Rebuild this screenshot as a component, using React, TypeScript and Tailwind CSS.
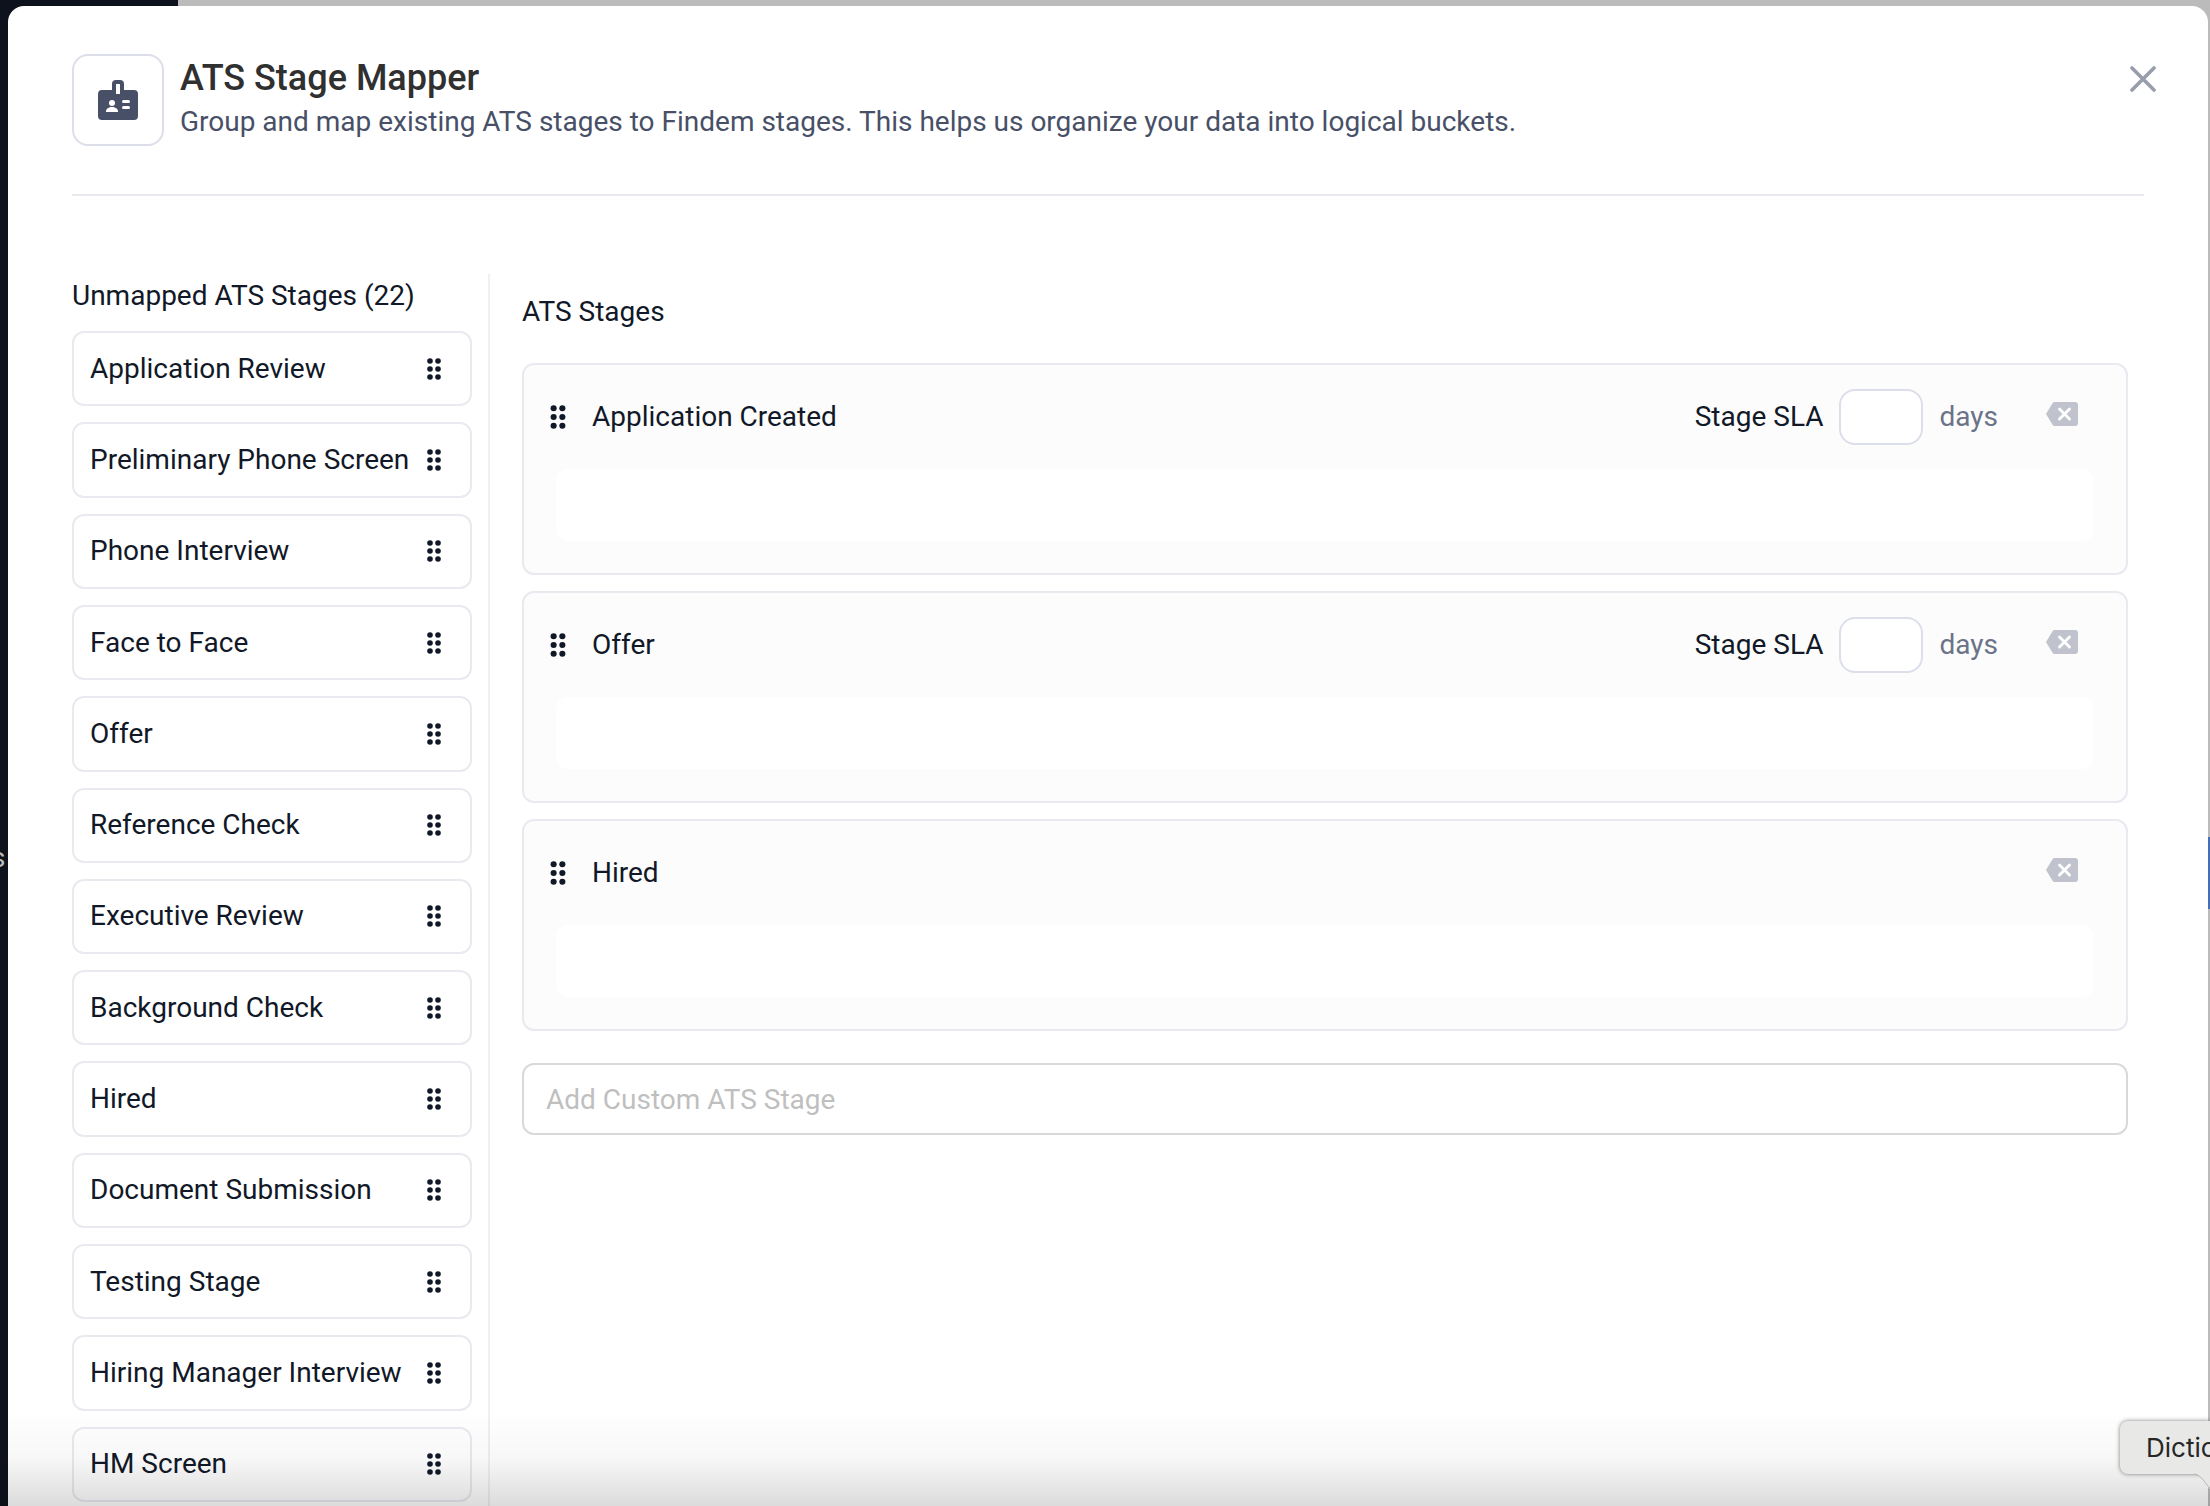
const unmappedStages = [
    "Application Review",
    "Preliminary Phone Screen",
    "Phone Interview",
    "Face to Face",
    "Offer",
    "Reference Check",
    "Executive Review",
    "Background Check",
    "Hired",
    "Document Submission",
    "Testing Stage",
    "Hiring Manager Interview",
    "HM Screen",
];

const atsStages = [
    { name: "Application Created", hasSla: true },
    { name: "Offer", hasSla: true },
    { name: "Hired", hasSla: false },
];

function DragDots({ className }: { className: string }) {
    return (
        <svg viewBox="0 0 14 22" fill="currentColor" className={className} aria-hidden="true">
            {[3, 11, 19].map((cy) => (
                <g key={cy}>
                    <circle cx="3" cy={cy} r="2.800" />
                    <circle cx="11" cy={cy} r="2.800" />
                </g>
            ))}
        </svg>
    );
}

function BadgeIcon() {
    return (
        <svg viewBox="0 0 40 40" className="size-10" aria-hidden="true">
            <path
                fill="#475067"
                d="M18 0h4a4 4 0 0 1 4 4v6h10a4 4 0 0 1 4 4v22a4 4 0 0 1-4 4H4a4 4 0 0 1-4-4V14a4 4 0 0 1 4-4h10V4a4 4 0 0 1 4-4z"
            />
            <g fill="#fff">
                <path d="M18 4h4v10h-4z" />
                <circle cx="14" cy="23" r="3" />
                <path d="M8 32v-1c0-2 3-4 6-4s6 2 6 4v1z" />
                <rect x="24" y="20" width="8" height="3" rx="1.5" />
                <rect x="24" y="26" width="8" height="3" rx="1.5" />
            </g>
        </svg>
    );
}

function RemoveIcon() {
    return (
        <svg viewBox="0 0 32 24" className="h-6 w-8" aria-hidden="true">
            <path
                fill="#c0c3ce"
                d="M9 0h20a3 3 0 0 1 3 3v18a3 3 0 0 1-3 3H9a3 3 0 0 1-2.500-1.300L0 12 6.500 1.300A3 3 0 0 1 9 0z"
            />
            <path d="M13.500 7l10 10M23.500 7l-10 10" stroke="#fff" strokeWidth="2.900" strokeLinecap="round" />
        </svg>
    );
}

function UnmappedList() {
    return (
        <section className="flex w-[418px] shrink-0 flex-col border-r-2 border-[#f0f0f3] pr-4">
            <h2 className="mt-1 mb-[17px] text-[28px] leading-9 whitespace-nowrap">
                Unmapped ATS Stages (22)
            </h2>

            <ul className="grid flex-1 auto-rows-fr gap-4 pb-1">
                {unmappedStages.map((stage) => (
                    <li
                        key={stage}
                        className="flex items-center justify-between rounded-xl border-2 border-[#e9e9f0] pr-[29px] pl-4"
                    >
                        <span className="text-[28px] leading-9 whitespace-nowrap">{stage}</span>
                        <DragDots className="h-[22px] w-[14px] shrink-0" />
                    </li>
                ))}
            </ul>
        </section>
    );
}

function StageCard({ name, hasSla }: { name: string; hasSla: boolean }) {
    return (
        <li className="rounded-xl border-2 border-[#e9e9f0] bg-[#fcfcfc] px-8 pt-6 pb-8">
            <div className="-ml-1.5 flex h-14 items-center">
                <DragDots className="h-6 w-4 shrink-0" />
                <h3 className="ml-[26px] text-[28px] leading-9">{name}</h3>

                <div className="ml-auto flex items-center">
                    {hasSla && (
                        <label className="flex items-center text-[28px] leading-9">
                            Stage SLA
                            <input
                                type="text"
                                className="mx-4 h-14 w-[84px] rounded-2xl border-2 border-[#dcdfea] bg-white px-3 text-center outline-none"
                            />
                            <span className="text-[#6b7389]">days</span>
                        </label>
                    )}
                    <button type="button" aria-label={`Remove ${name}`} className="mr-4 ml-12 pb-1.5">
                        <RemoveIcon />
                    </button>
                </div>
            </div>

            <div className="mt-6 h-[72px] rounded-xl bg-white" />
        </li>
    );
}

export default function App() {
    return (
        <div className="relative flex h-screen flex-col overflow-hidden bg-[#bbbbbb] font-[Roboto,sans-serif] text-[#111827]">
            {/* dimmed page behind the dialog */}
            <div className="absolute inset-y-0 left-0 w-[178px] bg-[#0e121d]" />
            <span className="absolute top-[842px] -left-[9px] text-[28px] leading-8 text-[#bbbbbb]">s</span>
            <div className="absolute top-[837px] right-0 h-[72px] w-4 bg-[#446fb8]" />

            <main
                role="dialog"
                aria-labelledby="dialog-title"
                className="relative mt-[6px] mr-[2px] ml-2 flex min-h-0 flex-1 flex-col rounded-t-2xl bg-white pr-16 pl-16"
            >
                <header className="flex items-start border-b-2 border-[#e9e9f0] pt-12 pb-12">
                    <div className="flex size-[92px] shrink-0 items-center justify-center rounded-2xl border-2 border-[#dcdfea]">
                        <BadgeIcon />
                    </div>
                    <div className="ml-4">
                        <h1 id="dialog-title" className="text-4xl leading-[48px] font-medium text-[#303030]">
                            ATS Stage Mapper
                        </h1>
                        <p className="text-[28px] leading-10 text-[#475067]">
                            Group and map existing ATS stages to Findem stages. This helps us organize your data into
                            logical buckets.
                        </p>
                    </div>
                    <button type="button" aria-label="Close" className="-mr-3 mt-3 ml-auto">
                        <svg viewBox="0 0 26 26" className="size-[26px]" fill="none" stroke="#989dae" strokeWidth="3.600" strokeLinecap="round">
                            <path d="M2 2l22 22M24 2L2 24" />
                        </svg>
                    </button>
                </header>

                <div className="mt-[78px] flex min-h-0 flex-1">
                    <UnmappedList />

                    <section className="flex-1 pr-4 pl-8">
                        <h2 className="mt-5 mb-[33px] text-[28px] leading-9">ATS Stages</h2>
                        <ul className="flex flex-col gap-4">
                            {atsStages.map((stage) => (
                                <StageCard key={stage.name} name={stage.name} hasSla={stage.hasSla} />
                            ))}
                        </ul>
                        <input
                            type="text"
                            aria-label="Add Custom ATS Stage"
                            placeholder="Add Custom ATS Stage"
                            className="mt-8 h-[72px] w-full rounded-xl border-2 border-[#d9d9d9] px-[22px] text-[28px] outline-none placeholder:text-[#bfbfbf]"
                        />
                    </section>
                </div>
            </main>

            <div className="pointer-events-none absolute inset-x-0 bottom-0 h-24 bg-linear-to-b from-transparent via-black/3 to-black/14" />

            {/* dock tooltip, cut by the window edge */}
            <div className="absolute right-0 bottom-8 h-[53px] w-[90px] rounded-l-lg bg-[#e8e8e6] pl-[26px] font-[Inter,sans-serif] text-[26px] leading-[54px] text-[#262626] shadow-[0_0_4px_rgba(0,0,0,0.5)]">
                <span className="block overflow-hidden">Dictio</span>
                <svg viewBox="0 0 16 16" className="absolute top-[52px] right-0 size-4" aria-hidden="true">
                    <path d="M0 0h16v16C12 13 8 2 0 0z" fill="#e8e8e6" />
                    <path d="M0 1c8 1 12 11 16 14" fill="none" stroke="#b5b5b5" />
                </svg>
            </div>
        </div>
    );
}
